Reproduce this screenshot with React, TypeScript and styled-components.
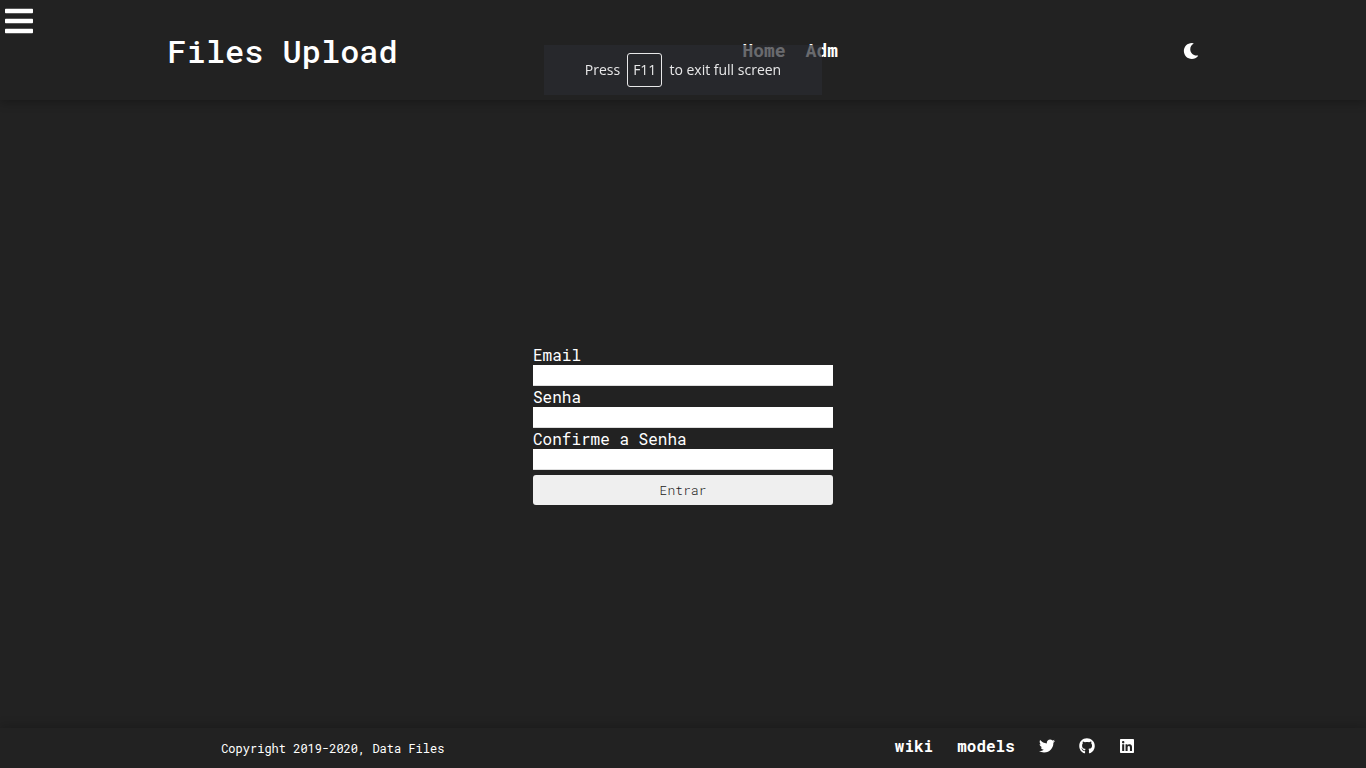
import React from "react";
import styled, { createGlobalStyle } from "styled-components";
import { FaBars, FaTwitter, FaGithub, FaLinkedin, FaMoon } from "react-icons/fa";

const GlobalStyle = createGlobalStyle`
  * {
    margin: 0;
    padding: 0;
    box-sizing: border-box;
  }
  body {
    background: #222;
    color: #fff;
    font-family: "Roboto Mono", "DejaVu Sans Mono", monospace;
    font-size: 16px;
  }
`;

const Page = styled.div`
  display: flex;
  flex-direction: column;
  min-height: 100vh;
`;

const Header = styled.header`
  display: flex;
  align-items: center;
  justify-content: space-around;
  height: 100px;
  padding-top: 2px;
  box-shadow: 0 2px 10px rgba(0, 0, 0, 0.3);
`;

const IconButton = styled.button`
  display: flex;
  border: 0;
  background: none;
  color: #fff;
  font-size: 16px;
  cursor: pointer;
`;

const MenuButton = styled(IconButton)`
  position: absolute;
  top: 5px;
  left: 3px;
  font-size: 32px;
`;

const Title = styled.h1`
  font-size: 32px;
  font-weight: 500;
  line-height: 42px;
`;

const Nav = styled.nav`
  display: flex;
  padding-bottom: 2px;
`;

const NavLink = styled.a`
  margin: 0 10px;
  color: #fff;
  font-size: 18px;
  font-weight: 700;
  line-height: 24px;
  text-decoration: none;
`;

const Main = styled.main`
  display: flex;
  flex: 1;
  align-items: center;
  justify-content: center;
  padding-top: 20px;
`;

const Form = styled.form`
  display: flex;
  flex-direction: column;
  width: 300px;
`;

const Label = styled.label`
  line-height: 21px;
`;

const Input = styled.input`
  height: 21px;
  border: 0;
  border-bottom: 1px solid #ddd;
  background: #fff;
  font: inherit;
`;

const Submit = styled.button`
  height: 30px;
  margin-top: 5px;
  border: 0;
  border-radius: 3px;
  background: #efefef;
  color: #222;
  font-family: inherit;
  font-size: 13px;
  font-weight: 300;
  cursor: pointer;
`;

const Footer = styled.footer`
  display: flex;
  align-items: center;
  justify-content: space-around;
  height: 40px;
  padding-left: 2px;
  box-shadow: 0 -2px 10px rgba(0, 0, 0, 0.2);
`;

const Copyright = styled.p`
  font-size: 12px;
  line-height: 16px;
`;

const FooterLinks = styled.nav`
  display: flex;
  align-items: center;
  padding-bottom: 4px;
`;

const FooterLink = styled.a`
  display: flex;
  margin: 0 12px;
  color: #fff;
  font-weight: 700;
  line-height: 20px;
  text-decoration: none;
`;

const Notice = styled.div`
  position: fixed;
  top: 45px;
  left: 50%;
  transform: translateX(-50%);
  display: flex;
  align-items: center;
  justify-content: center;
  gap: 7px;
  width: 278px;
  height: 50px;
  background: rgba(41, 43, 49, 0.7);
  color: #e8e8e9;
  font-family: "Open Sans", sans-serif;
  font-size: 14px;
  line-height: 32px;
  white-space: nowrap;
`;

const Key = styled.kbd`
  padding: 0 5px;
  border: 1px solid #e8e8e9;
  border-radius: 3px;
  font: inherit;
`;

const fields = [
  { id: "email", label: "Email", type: "email" },
  { id: "password", label: "Senha", type: "password" },
  { id: "confirm", label: "Confirme a Senha", type: "password" },
];

export default function App() {
  return (
    <>
      <GlobalStyle />
      <Page>
        <Header>
          <Title>Files Upload</Title>
          <Nav>
            <NavLink href="#home">Home</NavLink>
            <NavLink href="#adm">Adm</NavLink>
          </Nav>
          <IconButton type="button" aria-label="Toggle theme">
            <FaMoon />
          </IconButton>
        </Header>
        <MenuButton type="button" aria-label="Menu">
          <FaBars />
        </MenuButton>
        <Main>
          <Form>
            {fields.map((field) => (
              <React.Fragment key={field.id}>
                <Label htmlFor={field.id}>{field.label}</Label>
                <Input id={field.id} type={field.type} />
              </React.Fragment>
            ))}
            <Submit type="submit">Entrar</Submit>
          </Form>
        </Main>
        <Footer>
          <Copyright>Copyright 2019-2020, Data Files</Copyright>
          <FooterLinks>
            <FooterLink href="#wiki">wiki</FooterLink>
            <FooterLink href="#models">models</FooterLink>
            <FooterLink href="#twitter" aria-label="Twitter">
              <FaTwitter />
            </FooterLink>
            <FooterLink href="#github" aria-label="GitHub">
              <FaGithub />
            </FooterLink>
            <FooterLink href="#linkedin" aria-label="LinkedIn">
              <FaLinkedin />
            </FooterLink>
          </FooterLinks>
        </Footer>
      </Page>
      <Notice role="status">
        <span>Press</span>
        <Key>F11</Key>
        <span>to exit full screen</span>
      </Notice>
    </>
  );
}
